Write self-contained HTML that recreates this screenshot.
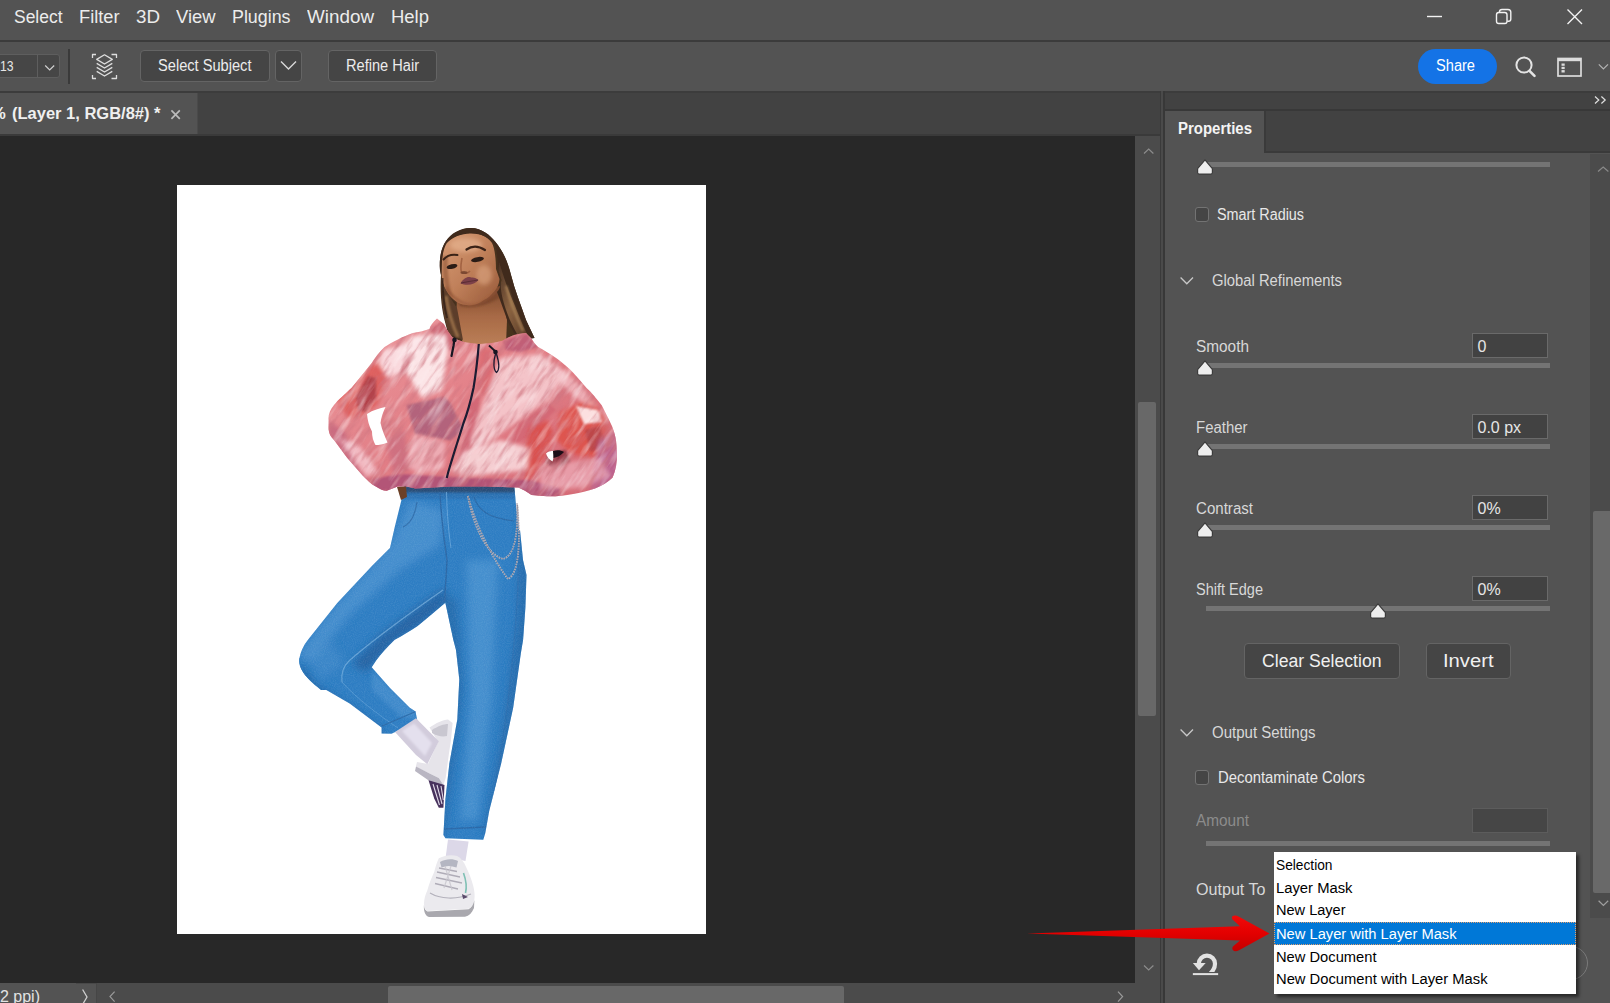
<!DOCTYPE html>
<html>
<head>
<meta charset="utf-8">
<title>Select and Mask</title>
<style>
*{box-sizing:border-box;margin:0;padding:0}
html,body{width:1610px;height:1003px;overflow:hidden;background:#535353;font-family:"Liberation Sans",sans-serif;color:#e4e4e4}
.abs{position:absolute}
#root{position:absolute;left:0;top:0;width:1610px;height:1003px;overflow:hidden;background:#535353}
.t{position:absolute;white-space:nowrap;line-height:1;transform-origin:0 50%}
</style>
</head>
<body>
<div id="root">
<div class="abs" style="left:0px;top:0px;width:1610px;height:40px;background:#535353;"></div>
<div class="abs" style="left:0px;top:40px;width:1610px;height:2px;background:#3b3b3b;"></div>
<span class="t" style="left:14.0px;top:8.0px;font-size:18px;color:#ececec;transform:scaleX(0.9695);">Select</span>
<span class="t" style="left:79.0px;top:8.0px;font-size:18px;color:#ececec;transform:scaleX(1.0125);">Filter</span>
<span class="t" style="left:135.5px;top:8.0px;font-size:18px;color:#ececec;transform:scaleX(1.0431);">3D</span>
<span class="t" style="left:176.0px;top:8.0px;font-size:18px;color:#ececec;transform:scaleX(1.0210);">View</span>
<span class="t" style="left:232.0px;top:8.0px;font-size:18px;color:#ececec;transform:scaleX(0.9909);">Plugins</span>
<span class="t" style="left:306.5px;top:8.0px;font-size:18px;color:#ececec;transform:scaleX(1.0466);">Window</span>
<span class="t" style="left:391.0px;top:8.0px;font-size:18px;color:#ececec;transform:scaleX(1.0265);">Help</span>
<svg class="abs" style="left:1420px;top:0px" width="190" height="40" viewBox="0 0 190 40" fill="none"><g stroke="#f2f2f2" stroke-width="1.4"><path d="M7 16.5H22"/>
<rect x="76.5" y="12.5" width="10.5" height="11" rx="2.2"/>
<path d="M79.5 12.3V11.8Q79.5 9.5 82 9.5H88Q90.8 9.5 90.8 12.3V19Q90.8 21.3 88.5 21.3H87.2"/>
<path d="M147.5 9.5L162 24M162 9.5L147.5 24"/></g></svg>
<div class="abs" style="left:0px;top:42px;width:1610px;height:49px;background:#535353;"></div>
<div class="abs" style="left:-4px;top:54px;width:64px;height:24px;background:#464646;border:1px solid #5e5e5e;border-radius:3px"></div>
<div class="abs" style="left:37px;top:55px;width:1px;height:23px;background:#5e5e5e;"></div>
<span class="t" style="left:0.0px;top:58.0px;font-size:15px;color:#e6e6e6;transform:scaleX(0.8091);">13</span>
<svg class="abs" style="left:44px;top:64px" width="12" height="8" viewBox="0 0 12 8" fill="none"><path d="M1.2 1.5L5.7 6L10.2 1.5" stroke="#cfcfcf" stroke-width="1.2"/></svg>
<div class="abs" style="left:68px;top:49px;width:2px;height:35px;background:#3a3a3a;"></div>
<svg class="abs" style="left:90px;top:52px" width="30" height="30" viewBox="0 0 30 30" fill="none"><g stroke="#dedede" stroke-width="1.3" stroke-linejoin="round">
<path d="M2.5 6V2.5H6M21.5 2.5H26.5V6M26.5 23V26.5H21.5M6 26.5H2.5V23"/>
<path d="M14.5 2.8L22.3 7.4L14.5 12L6.7 7.4Z"/>
<path d="M6.7 11.4L14.5 16L22.3 11.4M6.7 15.4L14.5 20L22.3 15.4M6.7 19.4L14.5 24L22.3 19.4"/></g></svg>
<div class="abs" style="left:140px;top:50px;width:130px;height:32px;background:#454545;border:1px solid #646464;border-radius:4px"></div>
<span class="t" style="left:157.5px;top:58.0px;font-size:16px;color:#ececec;transform:scaleX(0.9141);">Select Subject</span>
<div class="abs" style="left:275px;top:50px;width:27px;height:32px;background:#454545;border:1px solid #646464;border-radius:4px"></div>
<svg class="abs" style="left:279px;top:58px" width="20" height="16" viewBox="0 0 20 16" fill="none"><path d="M2 3.5L9.5 11L17 3.5" stroke="#d8d8d8" stroke-width="1.4"/></svg>
<div class="abs" style="left:328px;top:50px;width:109px;height:32px;background:#454545;border:1px solid #646464;border-radius:4px"></div>
<span class="t" style="left:345.5px;top:58.0px;font-size:16px;color:#ececec;transform:scaleX(0.9121);">Refine Hair</span>
<div class="abs" style="left:1418px;top:49px;width:79px;height:35px;background:#1473e6;border-radius:18px"></div>
<span class="t" style="left:1436.0px;top:58.0px;font-size:16px;color:#ffffff;transform:scaleX(0.9134);">Share</span>
<svg class="abs" style="left:1512px;top:53px" width="28" height="28" viewBox="0 0 28 28" fill="none"><circle cx="12" cy="12" r="7.6" stroke="#e4e4e4" stroke-width="2"/><path d="M17.5 17.8L22.5 22.8" stroke="#e4e4e4" stroke-width="2.6" stroke-linecap="round"/></svg>
<svg class="abs" style="left:1555px;top:55px" width="30" height="24" viewBox="0 0 30 24" fill="none"><rect x="3" y="3.5" width="23" height="17.5" stroke="#dcdcdc" stroke-width="1.7"/><path d="M3 5H26" stroke="#dcdcdc" stroke-width="2.4"/><rect x="6.5" y="8.5" width="3.2" height="9" fill="#dcdcdc"/><path d="M6 11.3H10M6 14.6H10" stroke="#535353" stroke-width="1"/></svg>
<svg class="abs" style="left:1596px;top:60px" width="14" height="12" viewBox="0 0 14 12" fill="none"><path d="M2.8 4.4L7.4 9L12 4.4" stroke="#b4b4b4" stroke-width="1.2"/></svg>
<div class="abs" style="left:0px;top:91px;width:1161px;height:45px;background:#424242;"></div>
<div class="abs" style="left:0px;top:91px;width:1161px;height:2px;background:#3c3c3c;"></div>
<div class="abs" style="left:0px;top:134px;width:1161px;height:2px;background:#3a3a3a;"></div>
<div class="abs" style="left:0px;top:93px;width:197px;height:41px;background:#535353;"></div>
<div class="abs" style="left:197px;top:93px;width:1px;height:41px;background:#4a4a4a;"></div>
<span class="t" style="left:-8.5px;top:106.0px;font-size:16px;color:#f0f0f0;font-weight:bold;">%</span>
<span class="t" style="left:11.5px;top:106.0px;font-size:16px;color:#f0f0f0;font-weight:bold;transform:scaleX(1.0309);">(Layer 1, RGB/8#) *</span>
<svg class="abs" style="left:169px;top:108px" width="14" height="14" viewBox="0 0 14 14" fill="none"><path d="M2.4 2.4L10.8 10.8M10.8 2.4L2.4 10.8" stroke="#bcbcbc" stroke-width="1.7"/></svg>
<div class="abs" style="left:0px;top:136px;width:1135px;height:847px;background:#282828;"></div>
<div class="abs" style="left:177px;top:185px;width:529px;height:749px;background:#ffffff;"></div>
<svg class="abs" style="left:177px;top:185px" width="529" height="749" viewBox="177 185 529 749">
<defs>
<filter id="soft" x="-5%" y="-5%" width="110%" height="110%"><feGaussianBlur stdDeviation="0.6"/></filter>
<filter id="b2" x="-30%" y="-30%" width="160%" height="160%"><feGaussianBlur stdDeviation="2.2"/></filter>
<filter id="b4" x="-40%" y="-40%" width="180%" height="180%"><feGaussianBlur stdDeviation="4"/></filter>
<filter id="b1" x="-30%" y="-30%" width="160%" height="160%"><feGaussianBlur stdDeviation="1.1"/></filter>
<filter id="foil" x="0" y="0" width="100%" height="100%">
  <feTurbulence type="fractalNoise" baseFrequency="0.03 0.16" numOctaves="3" seed="7" result="n"/>
  <feColorMatrix in="n" type="matrix" values="0 0 0 0 1  0 0 0 0 0.93  0 0 0 0 0.94  2.6 0 0 0 -1.25" result="w"/>
  <feComposite in="w" in2="SourceGraphic" operator="in"/>
</filter>
<filter id="foild" x="0" y="0" width="100%" height="100%">
  <feTurbulence type="fractalNoise" baseFrequency="0.035 0.17" numOctaves="3" seed="23" result="n"/>
  <feColorMatrix in="n" type="matrix" values="0 0 0 0 0.62  0 0 0 0 0.18  0 0 0 0 0.22  0 2.4 0 0 -1.1" result="w"/>
  <feComposite in="w" in2="SourceGraphic" operator="in"/>
</filter>
<filter id="denim" x="0" y="0" width="100%" height="100%">
  <feTurbulence type="fractalNoise" baseFrequency="0.9" numOctaves="2" seed="3" result="n"/>
  <feColorMatrix in="n" type="matrix" values="0 0 0 0 1  0 0 0 0 1  0 0 0 0 1  0.5 0 0 0 -0.17" result="w"/>
  <feComposite in="w" in2="SourceGraphic" operator="in"/>
</filter>
<linearGradient id="skin" x1="0" y1="0" x2="1" y2="1"><stop offset="0" stop-color="#d89c76"/><stop offset="0.5" stop-color="#c0805a"/><stop offset="1" stop-color="#965838"/></linearGradient>
<linearGradient id="neck" x1="0" y1="0" x2="0" y2="1"><stop offset="0" stop-color="#7e4a2e"/><stop offset="0.5" stop-color="#a86a46"/><stop offset="1" stop-color="#bc8058"/></linearGradient>
<linearGradient id="hairR" x1="0" y1="0" x2="1" y2="1"><stop offset="0" stop-color="#4a3224"/><stop offset="0.5" stop-color="#8a6240"/><stop offset="1" stop-color="#5a3c28"/></linearGradient>
<linearGradient id="jk" x1="0" y1="0" x2="1" y2="1"><stop offset="0" stop-color="#ec9a9e"/><stop offset="0.5" stop-color="#e27e86"/><stop offset="1" stop-color="#d56874"/></linearGradient>
<linearGradient id="thigh" x1="0" y1="0" x2="0.45" y2="1"><stop offset="0" stop-color="#4d93cf"/><stop offset="0.55" stop-color="#3f86c5"/><stop offset="1" stop-color="#2c6aa8"/></linearGradient>
<linearGradient id="leg" x1="0" y1="0" x2="1" y2="0.12"><stop offset="0" stop-color="#3479b8"/><stop offset="0.4" stop-color="#4b92cf"/><stop offset="0.75" stop-color="#4189c8"/><stop offset="1" stop-color="#2f70ae"/></linearGradient>
<linearGradient id="shin" x1="0" y1="1" x2="0.7" y2="0"><stop offset="0" stop-color="#2a66a2"/><stop offset="0.6" stop-color="#3a7fbe"/><stop offset="1" stop-color="#458ccb"/></linearGradient>
<clipPath id="cj"><path d="M437,318.500 C433,322 430,326 429.500,329 C424,331 418,332 413,333 C402,337 392,342 384.600,347 C379,352 375,358 371.400,363.600 L351.700,387.700 C345,394 338,400 334,405 C330,410 328,415 328.600,420 L328.600,429.400 C329,434 331,437 334,440 L347.300,457.900 L362.600,475.400 C367,480 371,484 375.800,486.400 C380,489 384,491 386.800,490.800 L397.700,486.400 L406.500,486.400 L415.300,488.600 L450.400,486.400 L485.400,486.400 L518.300,487.500 L525,490.800 L531.500,495 L546.800,496.300 C556,496.500 565,495.500 573,494 C581,492.500 588,491 595,488.600 C602,486 608,482 612.600,477.600 C616,470 617,462 617,453.500 L616,440.400 C615,434 613,428 610.400,422.800 L601.700,405.300 C597,399 592,393 586.300,387.700 L573,372.400 C568,367.500 563,363 557.800,359.200 C551,354.500 545,350.500 538,347 C535,344 533,341 531.500,338.400 L526,333 C522,333 518,334 514,335 C510,336.500 506,338.500 503,340.600 C495,343 487,344 478.900,343.900 C473,343.500 468,342.800 463.500,341.700 C459,340.500 455.500,339 452.500,337.300 C449,333 446,328.500 443.800,324 Z"/></clipPath>
<clipPath id="cleg"><path d="M405,483 L514,483 L516,505 L520,540 L470,600 L445,603 C436,611 427,618 417.600,626 C410,631 402,636 394.700,639.700 C388,646 381,654 376.300,660.300 L371.700,667.200 L345,690 L321,690 C312,683 306,677 302.900,671.800 C299.500,667 298.500,662 299.500,658 C301,650 305,643 309.800,637.400 L337.300,603 L371.700,566.300 L390,548 L394.700,527.300 L401.500,499.800 Z"/><path d="M299.500,658 C299,664 301,670 305,675 C308,678.500 312,681 316,684 L349.700,703.500 L381.600,727.400 L381.600,733.400 L391.500,733.800 L417.500,721.400 L415.500,711.500 L409.500,707.500 L390,688 L371.700,667.200 L369.600,665 C360,660 350,658 341.700,659.600 L320,652 Z"/><path d="M440,560 L520,530 L523,560 L526.500,575 L525.400,607.600 L523.100,639.700 L520.800,653.400 L513.200,707.500 L501.200,763.300 L489.200,811.100 L485.300,833 L483.300,839.800 L445.400,838.200 L443.400,835 L445.400,799.200 L449.400,763.300 L457.300,719.400 L459.300,679.600 L456,650 L453.300,639.700 L445.400,603 Z"/></clipPath>
</defs>
<g filter="url(#soft)">
<!-- hair back -->
<path d="M470,228 C481,227.500 490,235 495.500,242 C503,251 508,262 511,275 C515,291 521,305 526,320 L534.500,338 L500,346 L450,341 L444,318 C441,305 440,290 441,275 L440,270 C439,259 441,248 446,241 C452,233 462,228.500 470,228 Z" fill="#46301f"/>
<!-- neck -->
<path d="M457,298 L500,286 L507,320 L506,344 L480,347 L463,343 L456,320 Z" fill="url(#neck)"/>
<path d="M458,300 L498,288 L499,298 C486,306 472,309 460,306 Z" fill="#7e4a2e" filter="url(#b1)"/>
<!-- face -->
<path d="M445,243 C450,238 460,233.500 470,233 C479,233 487,236 492,243 C495,249 496,260 496,269 L499.500,279 C499,285 497,288 495,290.500 C491,295.500 488,298 484,300 C480,303 476,304.500 472,305 C468,305.500 464,305 461,304 C457,302.500 454,300 452,298 C448,294 445.500,290 444,287 C442.500,282 441.800,278 441.500,273 C441.500,266 442,260 442.500,255 C443,250 444,246 445,243 Z" fill="url(#skin)"/>
<ellipse cx="466" cy="245" rx="16" ry="7" fill="#e3ae8a" opacity=".8" filter="url(#b2)"/>
<ellipse cx="484" cy="275" rx="8" ry="10" fill="#d8a07c" opacity=".7" filter="url(#b2)"/>
<path d="M446,285 C452,296 462,303 472,304 C482,303 492,296 497,288 L496,292 C490,299 481,304 472,306 C462,305 452,300 445,290 Z" fill="#9a5c3c" opacity=".8" filter="url(#b1)"/>
<path d="M443,256 C442,270 443,284 448,294 L453,298 C449,286 447,270 448,256 Z" fill="#8c5234" opacity=".55" filter="url(#b1)"/>
<!-- brows / eyes / nose / lips -->
<path d="M443.500,259.500 C447,255.500 452,254 457.500,255" stroke="#3a2418" stroke-width="2" fill="none" stroke-linecap="round"/>
<path d="M466.500,249.500 C472,245.500 479,246 485,250" stroke="#3a2418" stroke-width="2.200" fill="none" stroke-linecap="round"/>
<ellipse cx="452" cy="266.500" rx="5.500" ry="2.300" fill="#2c1a14" transform="rotate(-14 452 266.500)"/>
<ellipse cx="477.500" cy="259.500" rx="6.500" ry="2.400" fill="#2c1a14" transform="rotate(-10 477.500 259.500)"/>
<path d="M462,258 C461,264 460,268 461.500,272 C464,274 468,273.500 470,271" stroke="#9a5a3c" stroke-width="1.600" fill="none" opacity=".8"/>
<ellipse cx="464" cy="272.500" rx="3.500" ry="1.600" fill="#70402a" opacity=".8"/>
<path d="M460.500,283.500 C463,278.500 468,276 471,277.500 C474,277 477,278.500 478.500,280 C475,284 468,286.500 460.500,283.500 Z" fill="#7c4048"/>
<path d="M461,283 C466,282 472,281 478,280" stroke="#5a2c34" stroke-width="1" fill="none"/>
<!-- hair left edge + locks -->
<path d="M470,228 C460,228.500 451,233 446,241 C441,248 439,259 440,270 L441,275 L441.500,273 C441.500,262 442.500,250 446.500,243.500 C452,237 462,233.500 470,233.500 C480,233 489,237 494.500,244 C497.500,250 498,262 498,270 L501.500,280 C501,286 499,290 497,292 L500,300 L508,322 L516,336 L534.500,338 L526,320 C521,305 515,291 511,275 C508,262 503,251 495.500,242 C490,235 481,227.500 470,228 Z" fill="#412b1d"/>
<path d="M499,262 C503,275 508,290 515,306 C519,316 523,326 527,334 L519,337 C512,326 506,312 503,300 C501,292 500,284 501.500,280 L498.500,271 Z" fill="url(#hairR)"/>
<path d="M506,286 C510,300 516,316 523,331" stroke="#b08a5c" stroke-width="2.500" fill="none" opacity=".75" filter="url(#b1)"/>
<path d="M441,276 C441,290 442,305 444.500,318 L449,334 L463,340 C461,330 459,318 457,308 C452,300 446,291 444,286 Z" fill="#5c3e2a"/>
<path d="M446,296 C448,310 452,324 458,337" stroke="#a87c50" stroke-width="3" fill="none" opacity=".8" filter="url(#b1)"/>
<path d="M442.500,278 C442.500,292 444,306 447,318" stroke="#2c1c14" stroke-width="2" fill="none" opacity=".7"/>

<!-- ===== jeans ===== -->
<path d="M405,483 L514,483 L516,505 L520,540 L470,600 L445,603 C436,611 427,618 417.600,626 C410,631 402,636 394.700,639.700 C388,646 381,654 376.300,660.300 L371.700,667.200 L345,690 L321,690 C312,683 306,677 302.900,671.800 C299.500,667 298.500,662 299.500,658 C301,650 305,643 309.800,637.400 L337.300,603 L371.700,566.300 L390,548 L394.700,527.300 L401.500,499.800 Z" fill="#2d7dc3"/>
<path d="M299.500,658 C299,664 301,670 305,675 C308,678.500 312,681 316,684 L349.700,703.500 L381.600,727.400 L381.600,733.400 L391.500,733.800 L417.500,721.400 L415.500,711.500 L409.500,707.500 L390,688 L371.700,667.200 L369.600,665 C360,660 350,658 341.700,659.600 L320,652 Z" fill="#2d7dc3"/>
<path d="M440,560 L520,530 L523,560 L526.500,575 L525.400,607.600 L523.100,639.700 L520.800,653.400 L513.200,707.500 L501.200,763.300 L489.200,811.100 L485.300,833 L483.300,839.800 L445.400,838.200 L443.400,835 L445.400,799.200 L449.400,763.300 L457.300,719.400 L459.300,679.600 L456,650 L453.300,639.700 L445.400,603 Z" fill="#2d7dc3"/>
<g clip-path="url(#cleg)">
  <path d="M392,540 L372,566 L337,603 L310,637 L298,658 L312,662 L350,615 L400,570 L440,545 L445,510 L410,500 Z" fill="#5d9fd8" opacity=".5" filter="url(#b4)"/>
  <path d="M445,604 L418,627 L395,641 L376,661 L366,672 L352,664 L380,636 L420,606 L446,588 Z" fill="#205a98" opacity=".75" filter="url(#b4)"/>
  <path d="M298,662 L316,686 L350,706 L382,730 L384,738 L340,712 L300,684 Z" fill="#1f5896" opacity=".7" filter="url(#b4)"/>
  <path d="M372,670 L392,690 L414,710 L418,720 L400,716 L372,690 Z" fill="#5a9cd6" opacity=".45" filter="url(#b2)"/>
  <path d="M304,650 L330,640 L345,664 L320,680 Z" fill="#4a90cd" opacity=".5" filter="url(#b4)"/>
  <path d="M466,560 L498,560 L492,700 L478,820 L460,820 L470,700 Z" fill="#5fa3da" opacity=".48" filter="url(#b4)"/>
  <path d="M444,596 L456,600 L462,690 L452,770 L444,836 L436,836 L450,700 Z" fill="#22609e" opacity=".6" filter="url(#b4)"/>
  <path d="M520,500 L530,500 L528,640 L514,720 L492,836 L484,836 L505,720 L518,620 Z" fill="#245f9d" opacity=".6" filter="url(#b4)"/>
  <path d="M404,482 L516,482 L516,493 L404,493 Z" fill="#2a3c5c" opacity=".75" filter="url(#b1)"/>
  <path d="M405,492 L515,492 L516,499 L404,499 Z" fill="#2c68a6" opacity=".5" filter="url(#b1)"/>
  <path d="M440,492 C441,520 445,545 447,560 C446,580 445,592 444.500,602" stroke="#2a65a3" stroke-width="1.400" fill="none" opacity=".9"/>
  <path d="M446.500,492 C447,515 449,535 451,548" stroke="#6aa8dc" stroke-width="1" fill="none" opacity=".8"/>
  <path d="M403,527 C410,524 415,515 417,502" stroke="#2a65a3" stroke-width="1.200" fill="none" opacity=".8"/>
  <path d="M474,497 C478,510 488,518 514,521" stroke="#2a65a3" stroke-width="1.200" fill="none" opacity=".8"/>
  <path d="M443,590 C420,606 380,634 350,660 C343,666 341,674 342,682" stroke="#7ab2e0" stroke-width="1.200" fill="none" opacity=".7"/>
  <path d="M342,682 C356,698 380,716 398,728" stroke="#7ab2e0" stroke-width="1" fill="none" opacity=".45"/>
  <path d="M382,726 L417,711" stroke="#2a65a3" stroke-width="1.300" opacity=".8"/>
  <path d="M444,829 L486,827" stroke="#2a65a3" stroke-width="1.300" opacity=".8"/>
  <path d="M519,520 C520,600 512,700 489,822" stroke="#2e6cab" stroke-width="1.200" fill="none" opacity=".6"/>
  <rect x="290" y="480" width="250" height="370" fill="#fff" filter="url(#denim)" opacity=".34"/>
</g>
<!-- chain -->
<path d="M468,496 C472,520 484,553 503,559 C513,556 518.500,540 517,503" stroke="#c9c4cc" stroke-width="1.700" fill="none" stroke-dasharray="1.600 1"/>
<path d="M468,496 C474,520 490,555 508,579 C518,574 521,548 517.500,505" stroke="#c9c4cc" stroke-width="1.700" fill="none" stroke-dasharray="1.600 1"/>
<path d="M468,496 C472,520 484,553 503,559 C513,556 518.500,540 517,503 M468,496 C474,520 490,555 508,579 C518,574 521,548 517.500,505" stroke="#6c6674" stroke-width=".6" fill="none" opacity=".7"/>

<!-- ===== socks / shoes ===== -->
<!-- raised foot -->
<path d="M429.500,727.500 C436,723 443,720 448,719.500 L452.600,723 L451,740 L449,753 L445.700,778 L443.400,785 L438.800,778 L429.600,773.400 L419.300,768.800 L415.900,766.500 L417,762 L428,764 L438,742 Z" fill="#e6e4ea"/>
<path d="M432,730 C438,726 444,724 448,724 L447,736 C442,737 437,736 432,733 Z" fill="#c9c7d0"/>
<path d="M416,766.500 L429.600,773.400 L438.800,778 L443.400,785 L444,790 L428,780 L415,771 Z" fill="#b9b6c2"/>
<path d="M428.500,780.300 L444.500,785 L443.400,807.800 L438.800,807.800 L434.200,798.600 Z" fill="#47305c"/>
<path d="M433,784 L439.500,805 M437,785 L442,804 M441,786 L443.300,800" stroke="#e0dae8" stroke-width="1.100"/>
<path d="M395,732 L416,718.300 L438.800,741.300 L427.300,764.200 L416,755 Z" fill="#d2ccdc"/>
<path d="M402,731 L414,723.500 L432,743 L425,756 Z" fill="#e4e0ee" filter="url(#b1)"/>
<!-- standing foot -->
<path d="M448,839.500 L468.600,841.500 L465.500,861 L445.700,857 Z" fill="#dcd8e8"/>
<path d="M438.800,858.300 C445,855 452,854.500 457.200,856 C461,858 464,862 466.300,867.400 C469,873 471.500,879 473.200,885.800 C474.500,891 475,896 474.400,899.500 C473.500,904 471.500,907 468.600,908.700 L427.300,911 C425,909.500 424,907 423.900,904.100 C424,899 425.500,894 427.300,890.400 C429,884 431.500,878 434.200,872 C435.500,867 437,862 438.800,858.300 Z" fill="#ebeaee"/>
<path d="M423.900,905 C424,908.500 425.500,910.500 427.500,911.500 L468.600,909.200 C471.500,907.500 473.500,904.500 474.400,900 L474,908 C472,913 469,916 465,916.800 L429,917 C425.500,916 423.500,912 423.900,905 Z" fill="#a9a8ae"/>
<path d="M440,862 C446,858.500 453,858.500 458,861 L456.500,867.500 C451,865.500 446,865.500 441.500,867.500 Z" fill="#b4b6c2"/>
<path d="M437,872 L460,877 M436,877.500 L462,883 M435,883.500 L458,889 M439,868 L457,871.500" stroke="#a9a6b2" stroke-width="1.300" opacity=".9"/>
<path d="M445,866 L452,890 M451,866 L444,888" stroke="#c8c6ce" stroke-width="1.200" opacity=".8"/>
<path d="M463.500,873 C466,880 467,887 465.500,893" stroke="#7fc0b4" stroke-width="1.600" fill="none"/>
<path d="M430,893 C440,899 456,900 471,894" stroke="#b4b2bc" stroke-width="1.200" fill="none"/>
<path d="M462,894 L468,897 L463,899 Z" fill="#5a4a6a"/>
<!-- ===== jacket ===== -->
<path d="M437,318.500 C433,322 430,326 429.500,329 C424,331 418,332 413,333 C402,337 392,342 384.600,347 C379,352 375,358 371.400,363.600 L351.700,387.700 C345,394 338,400 334,405 C330,410 328,415 328.600,420 L328.600,429.400 C329,434 331,437 334,440 L347.300,457.900 L362.600,475.400 C367,480 371,484 375.800,486.400 C380,489 384,491 386.800,490.800 L397.700,486.400 L406.500,486.400 L415.300,488.600 L450.400,486.400 L485.400,486.400 L518.300,487.500 L525,490.800 L531.500,495 L546.800,496.300 C556,496.500 565,495.500 573,494 C581,492.500 588,491 595,488.600 C602,486 608,482 612.600,477.600 C616,470 617,462 617,453.500 L616,440.400 C615,434 613,428 610.400,422.800 L601.700,405.300 C597,399 592,393 586.300,387.700 L573,372.400 C568,367.500 563,363 557.800,359.200 C551,354.500 545,350.500 538,347 C535,344 533,341 531.500,338.400 L526,333 C522,333 518,334 514,335 C510,336.500 506,338.500 503,340.600 C495,343 487,344 478.900,343.900 C473,343.500 468,342.800 463.500,341.700 C459,340.500 455.500,339 452.500,337.300 C449,333 446,328.500 443.800,324 Z" fill="url(#jk)"/>
<g clip-path="url(#cj)">
  <path d="M406.5,405 430,400 444,396.5 450.5,403 463.5,429.5 450.5,440.5 415,434Z" fill="#b0647c" opacity="0.95" filter="url(#b1)"/>
  <path d="M336,400 352,386 372,364 384,362 386,380 378,404 366,414 348,418Z" fill="#de5c5a" opacity="0.9" filter="url(#b2)"/>
  <path d="M356,396 368,376 376,378 376,398 366,412 358,410Z" fill="#a83c46" opacity="0.8" filter="url(#b1)"/>
  <path d="M470,400 480,396 476,430 462,470 456,468 466,430Z" fill="#c8566a" opacity="0.55" filter="url(#b1)"/>
  <path d="M520,422 548,402 556,410 530,436 500,452Z" fill="#cc5c6c" opacity="0.5" filter="url(#b1)"/>
  <path d="M560,412 590,398 606,420 612,450 596,458 572,454 556,440Z" fill="#de524c" opacity="0.92" filter="url(#b2)"/>
  <path d="M585,430 600,426 606,446 590,452Z" fill="#a83c44" opacity="0.6" filter="url(#b1)"/>
  <path d="M372,479 400,474 470,478 530,480 560,488 560,500 372,500Z" fill="#a84c74" opacity="0.8" filter="url(#b1)"/>
  <path d="M598,440 618,430 620,490 590,496Z" fill="#b0609c" opacity="0.65" filter="url(#b2)"/>
  <path d="M328,420 345,432 360,470 376,488 360,480 340,455 328,436Z" fill="#c0627c" opacity="0.7" filter="url(#b2)"/>
  <path d="M429,329 444,320 452,337 462,341 452,352 436,340Z" fill="#c8606e" opacity="0.8" filter="url(#b1)"/>
  <path d="M503,341 526,333 538,347 520,352 505,350Z" fill="#b85672" opacity="0.8" filter="url(#b1)"/>
  <path d="M480,346 500,352 494,380 486,398 476,388Z" fill="#d8646a" opacity="0.7" filter="url(#b2)"/>
  <path d="M529.8,427.8 547.8,420.3 553.7,433.7 544.8,454.7 534.3,474.1 526.8,481.6 523.8,454.7Z" fill="#da4e4a" opacity="0.88" filter="url(#b2)"/>
  <path d="M548,452 566,450 570,462 556,470 546,464Z" fill="#7a2830" opacity="0.8" filter="url(#b1)"/>
  <path d="M386,440 404,430 410,470 394,476Z" fill="#c4687e" opacity="0.6" filter="url(#b2)"/>
  <path d="M412,336 446,334 448,352 442,390 422,398 406,372 402,348Z" fill="#fdeaec" opacity="0.95" filter="url(#b2)"/>
  <path d="M384,350 408,344 404,372 388,378 378,364Z" fill="#fce2e6" opacity="0.9" filter="url(#b2)"/>
  <path d="M500,358 540,354 566,374 548,400 520,420 490,440 476,452 470,440 484,400Z" fill="#f9d6da" opacity="0.8" filter="url(#b2)"/>
  <path d="M462,452 500,440 530,448 528,470 470,476 452,472Z" fill="#fadde0" opacity="0.85" filter="url(#b2)"/>
  <path d="M576,406 598,410 602,422 584,424Z" fill="#fde8e8" opacity="0.95" filter="url(#b1)"/>
  <path d="M540,466 600,458 610,476 580,488 540,490Z" fill="#eeb0bc" opacity="0.7" filter="url(#b2)"/>
  <path d="M338,438 358,444 380,474 366,476Z" fill="#f6c8d0" opacity="0.8" filter="url(#b2)"/>
  <path d="M414,434 446,442 444,468 420,474 406,466Z" fill="#f3c0c8" opacity="0.7" filter="url(#b2)"/>
  <path d="M552,362 580,384 598,408 584,404 560,384Z" fill="#f5c8ce" opacity="0.7" filter="url(#b2)"/>
  <g transform="rotate(-56 470 410)"><rect x="270" y="210" width="400" height="400" fill="#fff" filter="url(#foild)" opacity=".85"/>
  <rect x="270" y="210" width="400" height="400" fill="#fff" filter="url(#foil)" opacity=".45"/></g>
</g>
<!-- arm gaps -->
<path d="M367,414 C373,410 380,408 385.500,407 C383,412 381,418 380.500,423 C382,430 385,437 387.500,442.500 C383,444.500 379,445 375.500,445 C373,441 372,436 372,431.500 C369,426 367.500,420 367,414 Z" fill="#fff"/>
<path d="M546,453.500 C549,451 552,450.500 554,451.500 C554,455 553.500,458.500 552.500,461.500 C549.500,460 547,457 546,453.500 Z" fill="#fff"/>
<path d="M553,451 C557,449.500 561,450 564,452 C561,455.500 557,457.500 553.500,458 Z" fill="#1a1014"/>
<!-- hand hint -->
<path d="M397,487 L406,486.500 L407,497 L401,500 Z" fill="#6c4028"/>
<!-- zipper + cords -->
<path d="M478.800,344 C477.500,360 475.500,376 473.500,388 C470.500,402 467,414 463.500,423 C459.500,436 455.500,448 452.500,458 C450,466 448,472 446.800,478" stroke="#1c1a30" stroke-width="2.200" fill="none"/>
<path d="M454.500,338.500 L453.500,346 L451.500,356" stroke="#141420" stroke-width="2.200" fill="none" stroke-linecap="round"/>
<circle cx="454.500" cy="340" r="2.300" fill="#141420"/>
<path d="M489,345.500 L495,351" stroke="#141420" stroke-width="1.800" fill="none"/>
<circle cx="495.500" cy="352" r="2.300" fill="#141420"/>
<path d="M495.500,354 C493,362 493.500,370 496.500,372.500 C499.500,370 499,362 496.500,354" stroke="#1c1a30" stroke-width="1.300" fill="none"/>
</g>
</svg>
<div class="abs" style="left:1135px;top:136px;width:25px;height:867px;background:#4b4b4b;"></div>
<svg class="abs" style="left:1142px;top:146px" width="14" height="10" viewBox="0 0 14 10" fill="none"><path d="M2 7.5L6.7 3L11.4 7.5" stroke="#8c8c8c" stroke-width="1.2"/></svg>
<svg class="abs" style="left:1142px;top:963px" width="14" height="10" viewBox="0 0 14 10" fill="none"><path d="M2 2.5L6.7 7L11.4 2.5" stroke="#8c8c8c" stroke-width="1.2"/></svg>
<div class="abs" style="left:1138px;top:402px;width:18px;height:313.5px;background:#686868;border-radius:2px"></div>
<div class="abs" style="left:0px;top:983px;width:1135px;height:20px;background:#4b4b4b;"></div>
<div class="abs" style="left:0px;top:983px;width:96px;height:20px;background:#535353;"></div>
<div class="abs" style="left:76px;top:983px;width:20px;height:1px;background:#484848;"></div>
<div class="abs" style="left:96px;top:983px;width:1px;height:20px;background:#464646;"></div>
<span class="t" style="left:-9.0px;top:989.0px;font-size:16px;color:#e2e2e2;transform:scaleX(1.0016);">72 ppi)</span>
<svg class="abs" style="left:80px;top:988px" width="10" height="16" viewBox="0 0 10 16" fill="none"><path d="M2.6 1.5L7 9L2.6 16.5" stroke="#d0d0d0" stroke-width="1.3"/></svg>
<svg class="abs" style="left:108px;top:990px" width="9" height="13" viewBox="0 0 9 13" fill="none"><path d="M6.6 1.6L2 6.6L6.6 11.6" stroke="#9a9a9a" stroke-width="1.2"/></svg>
<svg class="abs" style="left:1116px;top:990px" width="9" height="13" viewBox="0 0 9 13" fill="none"><path d="M2 1.6L6.6 6.6L2 11.6" stroke="#9a9a9a" stroke-width="1.2"/></svg>
<div class="abs" style="left:388px;top:986px;width:456px;height:17px;background:#686868;border-radius:2px 2px 0 0"></div>
<div class="abs" style="left:1160px;top:91px;width:1px;height:912px;background:#3a3a3a;"></div>
<div class="abs" style="left:1161px;top:91px;width:2px;height:912px;background:#4a4a4a;"></div>
<div class="abs" style="left:1163px;top:91px;width:1.5px;height:912px;background:#383838;"></div>
<div class="abs" style="left:1164.5px;top:91px;width:446px;height:912px;background:#535353;"></div>
<div class="abs" style="left:1164.5px;top:91px;width:446px;height:19px;background:#424242;"></div>
<div class="abs" style="left:1164.5px;top:91px;width:446px;height:2px;background:#3c3c3c;"></div>
<div class="abs" style="left:1164.5px;top:109px;width:446px;height:2px;background:#383838;"></div>
<div class="abs" style="left:1264px;top:111px;width:346px;height:41px;background:#424242;"></div>
<div class="abs" style="left:1264px;top:111px;width:1.5px;height:41px;background:#3a3a3a;"></div>
<div class="abs" style="left:1264px;top:151px;width:346px;height:1.5px;background:#3a3a3a;"></div>
<svg class="abs" style="left:1592px;top:94px" width="16" height="12" viewBox="0 0 16 12" fill="none"><path d="M3 2.5L6.8 6L3 9.5M9.4 2.5L13.2 6L9.4 9.5" stroke="#e0e0e0" stroke-width="1.2"/></svg>
<span class="t" style="left:1177.5px;top:121.0px;font-size:16px;color:#f4f4f4;font-weight:bold;transform:scaleX(0.9350);">Properties</span>
<div class="abs" style="left:1590px;top:154px;width:20px;height:764px;background:#4b4b4b;"></div>
<div class="abs" style="left:1593px;top:511px;width:17px;height:382px;background:#696969;border-radius:2px 0 0 2px"></div>
<svg class="abs" style="left:1596px;top:164px" width="14" height="10" viewBox="0 0 14 10" fill="none"><path d="M2 7.5L7.2 3L12.4 7.5" stroke="#8a8a8a" stroke-width="1.2"/></svg>
<svg class="abs" style="left:1596px;top:898px" width="14" height="10" viewBox="0 0 14 10" fill="none"><path d="M2.6 2.8L7.4 7.4L12.2 2.8" stroke="#a0a0a0" stroke-width="1.2"/></svg>
<div class="abs" style="left:1207px;top:162px;width:342.5px;height:5px;background:#747474;"></div>
<svg class="abs" style="left:1194.75px;top:159.2px" width="20" height="18" viewBox="0 0 20 18" fill="none"><path d="M10 0.9L17.4 9.6V13.6Q17.4 15.1 15.9 15.1H4.1Q2.6 15.1 2.6 13.6V9.6Z" fill="#eeeeee" stroke="#3c3c3c" stroke-width="1.2" stroke-linejoin="round"/></svg>
<div class="abs" style="left:1195px;top:207.2px;width:14.2px;height:14.4px;background:#454545;border:1.3px solid #737373;border-radius:3px"></div>
<span class="t" style="left:1217.0px;top:207.0px;font-size:16px;color:#e8e8e8;transform:scaleX(0.8976);">Smart Radius</span>
<svg class="abs" style="left:1178.5px;top:275px" width="16" height="12" viewBox="0 0 16 12" fill="none"><path d="M1.6 2.5L7.8 8.8L14 2.5" stroke="#c8c8c8" stroke-width="1.3"/></svg>
<span class="t" style="left:1212.0px;top:273.0px;font-size:16px;color:#d8d8d8;transform:scaleX(0.9252);">Global Refinements</span>
<span class="t" style="left:1196.0px;top:339.0px;font-size:16px;color:#d8d8d8;transform:scaleX(0.9612);">Smooth</span>
<div class="abs" style="left:1472px;top:333px;width:76px;height:25px;background:#424242;border:1px solid #6a6a6a"></div>
<span class="t" style="left:1477.5px;top:339.0px;font-size:16px;color:#e6e6e6;">0</span>
<div class="abs" style="left:1207px;top:363px;width:342.5px;height:5px;background:#747474;"></div>
<svg class="abs" style="left:1194.75px;top:360.2px" width="20" height="18" viewBox="0 0 20 18" fill="none"><path d="M10 0.9L17.4 9.6V13.6Q17.4 15.1 15.9 15.1H4.1Q2.6 15.1 2.6 13.6V9.6Z" fill="#eeeeee" stroke="#3c3c3c" stroke-width="1.2" stroke-linejoin="round"/></svg>
<span class="t" style="left:1196.0px;top:420.0px;font-size:16px;color:#d8d8d8;transform:scaleX(0.9340);">Feather</span>
<div class="abs" style="left:1472px;top:414px;width:76px;height:25px;background:#424242;border:1px solid #6a6a6a"></div>
<span class="t" style="left:1477.5px;top:420.0px;font-size:16px;color:#e6e6e6;">0.0 px</span>
<div class="abs" style="left:1207px;top:444px;width:342.5px;height:5px;background:#747474;"></div>
<svg class="abs" style="left:1194.75px;top:441.2px" width="20" height="18" viewBox="0 0 20 18" fill="none"><path d="M10 0.9L17.4 9.6V13.6Q17.4 15.1 15.9 15.1H4.1Q2.6 15.1 2.6 13.6V9.6Z" fill="#eeeeee" stroke="#3c3c3c" stroke-width="1.2" stroke-linejoin="round"/></svg>
<span class="t" style="left:1196.0px;top:501.0px;font-size:16px;color:#d8d8d8;transform:scaleX(0.9426);">Contrast</span>
<div class="abs" style="left:1472px;top:495px;width:76px;height:25px;background:#424242;border:1px solid #6a6a6a"></div>
<span class="t" style="left:1477.5px;top:501.0px;font-size:16px;color:#e6e6e6;">0%</span>
<div class="abs" style="left:1207px;top:525px;width:342.5px;height:5px;background:#747474;"></div>
<svg class="abs" style="left:1194.75px;top:522.2px" width="20" height="18" viewBox="0 0 20 18" fill="none"><path d="M10 0.9L17.4 9.6V13.6Q17.4 15.1 15.9 15.1H4.1Q2.6 15.1 2.6 13.6V9.6Z" fill="#eeeeee" stroke="#3c3c3c" stroke-width="1.2" stroke-linejoin="round"/></svg>
<span class="t" style="left:1196.0px;top:582.0px;font-size:16px;color:#d8d8d8;transform:scaleX(0.9075);">Shift Edge</span>
<div class="abs" style="left:1472px;top:576px;width:76px;height:25px;background:#424242;border:1px solid #6a6a6a"></div>
<span class="t" style="left:1477.5px;top:582.0px;font-size:16px;color:#e6e6e6;">0%</span>
<div class="abs" style="left:1206px;top:606px;width:343.5px;height:5px;background:#747474;"></div>
<svg class="abs" style="left:1367.5px;top:603.2px" width="20" height="18" viewBox="0 0 20 18" fill="none"><path d="M10 0.9L17.4 9.6V13.6Q17.4 15.1 15.9 15.1H4.1Q2.6 15.1 2.6 13.6V9.6Z" fill="#eeeeee" stroke="#3c3c3c" stroke-width="1.2" stroke-linejoin="round"/></svg>
<div class="abs" style="left:1244px;top:643px;width:155.5px;height:36px;background:#454545;border:1px solid #646464;border-radius:4px"></div>
<span class="t" style="left:1261.5px;top:652.0px;font-size:18px;color:#f0f0f0;transform:scaleX(0.9790);">Clear Selection</span>
<div class="abs" style="left:1426px;top:643px;width:85px;height:36px;background:#454545;border:1px solid #646464;border-radius:4px"></div>
<span class="t" style="left:1442.5px;top:652.0px;font-size:18px;color:#f0f0f0;transform:scaleX(1.1218);">Invert</span>
<svg class="abs" style="left:1178.5px;top:726.5px" width="16" height="12" viewBox="0 0 16 12" fill="none"><path d="M1.6 2.5L7.8 8.8L14 2.5" stroke="#c8c8c8" stroke-width="1.3"/></svg>
<span class="t" style="left:1212.0px;top:725.0px;font-size:16px;color:#d8d8d8;transform:scaleX(0.9384);">Output Settings</span>
<div class="abs" style="left:1195px;top:770.2px;width:14.2px;height:14.4px;background:#454545;border:1.3px solid #737373;border-radius:3px"></div>
<span class="t" style="left:1217.5px;top:770.0px;font-size:16px;color:#e8e8e8;transform:scaleX(0.9286);">Decontaminate Colors</span>
<span class="t" style="left:1196.0px;top:813.0px;font-size:16px;color:#8c8c8c;transform:scaleX(0.9612);">Amount</span>
<div class="abs" style="left:1472px;top:808px;width:76px;height:25px;background:#464646;border:1px solid #5c5c5c"></div>
<div class="abs" style="left:1206px;top:841px;width:343.5px;height:5px;background:#747474;"></div>
<span class="t" style="left:1196.0px;top:882.0px;font-size:16px;color:#d8d8d8;transform:scaleX(1.0060);">Output To</span>
<svg class="abs" style="left:1190px;top:951px" width="32" height="28" viewBox="0 0 32 28" ><rect x="2.85" y="22.1" width="25.3" height="2" fill="#e2e2e2"/>
<path d="M2.85 12H15.7L9 19.2Z" fill="#e2e2e2"/>
<path d="M6.7 12.6A10.2 10.2 0 0 1 27.1 12.8Q27.2 17.4 24.4 21H18.9Q22.9 17 22.9 12.8A6 6 0 0 0 10.9 12.6Z" fill="#e2e2e2"/></svg>
<div class="abs" style="left:1548px;top:946.3px;width:40px;height:33.8px;background:transparent;border:1.2px solid #7a7a7a;border-radius:17px"></div>
<svg class="abs" style="left:1020px;top:905px" width="260" height="60" viewBox="0 0 260 60" fill="none"><defs><linearGradient id="ar" x1="0" y1="0" x2="0" y2="1"><stop offset="0" stop-color="#f00a0a"/><stop offset="0.5" stop-color="#e30000"/><stop offset="1" stop-color="#c20000"/></linearGradient></defs>
<path d="M7 28.5L220 21.2L212.5 14.6Q210.5 11 214.5 10.6Q216.5 10.4 219 11.8L249.5 28.5L219 45.2Q215 47.4 212.8 45Q211.4 42.6 214 40.6L220 35.6Z" fill="url(#ar)"/></svg>
<div class="abs" style="left:1273.5px;top:852px;width:302px;height:142px;background:#ffffff;box-shadow:3px 3px 3px rgba(0,0,0,.5)"></div>
<div class="abs" style="left:1273.5px;top:921.5px;width:302px;height:23.2px;background:#0078d7;outline:1px dotted #e0a070;outline-offset:-1px"></div>
<span class="t" style="left:1275.5px;top:857.0px;font-size:15.5px;color:#000;transform:scaleX(0.8861);">Selection</span>
<span class="t" style="left:1275.5px;top:880.0px;font-size:15.5px;color:#000;transform:scaleX(0.9549);">Layer Mask</span>
<span class="t" style="left:1275.5px;top:902.0px;font-size:15.5px;color:#000;transform:scaleX(0.9381);">New Layer</span>
<span class="t" style="left:1275.5px;top:926.0px;font-size:15.5px;color:#fff;transform:scaleX(0.9481);">New Layer with Layer Mask</span>
<span class="t" style="left:1275.5px;top:949.0px;font-size:15.5px;color:#000;transform:scaleX(0.9485);">New Document</span>
<span class="t" style="left:1275.5px;top:971.0px;font-size:15.5px;color:#000;transform:scaleX(0.9517);">New Document with Layer Mask</span>
</div>
</body>
</html>
